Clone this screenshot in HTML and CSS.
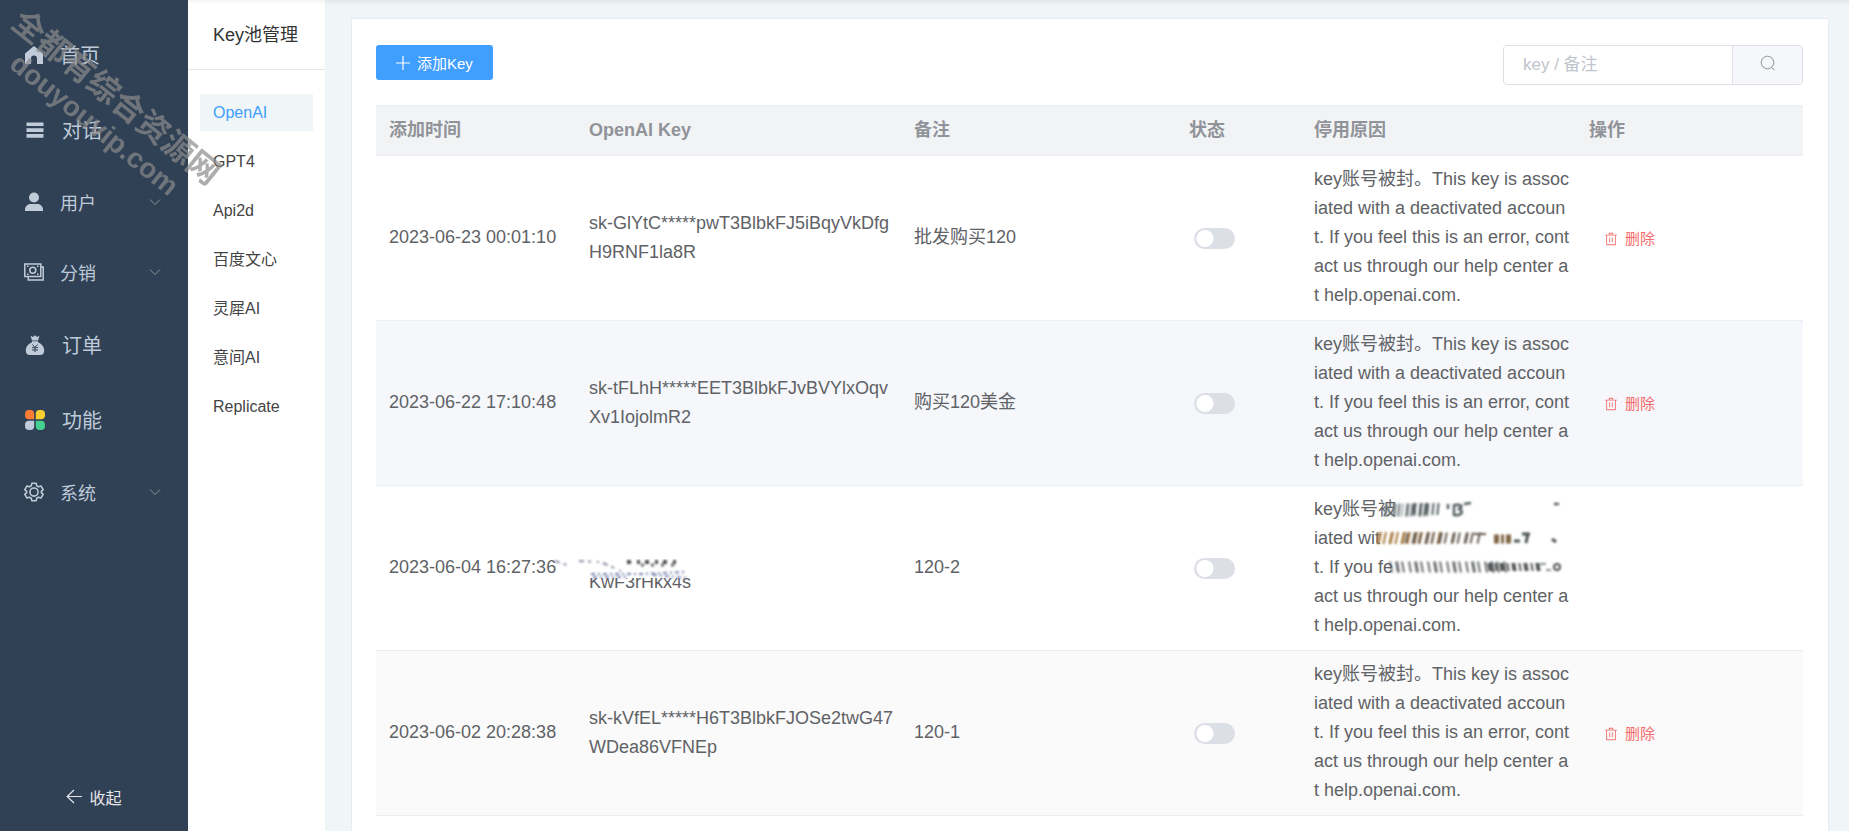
FILE: index.html
```html
<!DOCTYPE html>
<html lang="zh-CN">
<head>
<meta charset="utf-8">
<title>Key池管理</title>
<link rel="stylesheet" href="styles.css">
</head>
<body>
<svg class="defs" aria-hidden="true">
  <symbol id="trash" viewBox="0 0 1024 1024"><path fill="currentColor" d="M160 256H96a32 32 0 0 1 0-64h256V95.900a32 32 0 0 1 32-32h256a32 32 0 0 1 32 32V192h256a32 32 0 1 1 0 64h-64v672a32 32 0 0 1-32 32H192a32 32 0 0 1-32-32V256zm448-64v-64H416v64h192zM224 896h576V256H224v640zm192-128a32 32 0 0 1-32-32V416a32 32 0 0 1 64 0v320a32 32 0 0 1-32 32zm192 0a32 32 0 0 1-32-32V416a32 32 0 0 1 64 0v320a32 32 0 0 1-32 32z"/></symbol>
  <symbol id="chevron" viewBox="0 0 12 12"><path d="M1 3.500 6 8.500 11 3.500" fill="none" stroke="currentColor"/></symbol>
</svg>
<div class="app">
  <nav class="sidebar">
    <ul class="menu">
      <li><a class="item" href="#"><svg class="icon" viewBox="0 0 20 20"><path fill="currentColor" d="M10 1 1 8.500V19h6v-5.500a3 3 0 0 1 6 0V19h6V8.500z"/></svg><span>首页</span></a></li>
      <li><a class="item item-wide" href="#"><svg class="icon" viewBox="0 0 20 20"><path fill="currentColor" d="M1.500 2.500h17v3.600h-17zM1.500 8.300h17v3.600h-17zM1.500 14.100h17v3.600h-17z"/></svg><span>对话</span></a></li>
      <li><a class="item item-group" href="#"><svg class="icon" viewBox="0 0 20 20"><circle cx="10" cy="5.500" r="5" fill="currentColor"/><path fill="currentColor" d="M1 19v-1.500c0-3 2.500-5.500 5.500-5.500h7c3 0 5.500 2.500 5.500 5.500V19z"/></svg><span>用户</span><svg class="chevron"><use href="#chevron"/></svg></a></li>
      <li><a class="item item-group" href="#"><svg class="icon" viewBox="0 0 20 20" fill="none" stroke="currentColor" stroke-width="1.500"><path d="M.8 2h16v12.500h-16zM16.800 5h2.400v13H4.300v-3.500"/><circle cx="8.800" cy="8.200" r="3"/><path d="M3 4.200h1.500M13 4.200h1.500M3 12.300h1.500M13 12.300h1.500"/></svg><span>分销</span><svg class="chevron"><use href="#chevron"/></svg></a></li>
      <li><a class="item item-wide" href="#"><svg class="icon" viewBox="0 0 20 20"><path fill="currentColor" d="M5.500.8 8 2l2-1.800L12 2l2.500-1.200L13 5.500H7zM7 6.300h6v1c4 1.500 6.200 5 6.200 8.200 0 3-1.500 4.500-4.200 4.500H5c-2.700 0-4.200-1.500-4.200-4.500C.8 12.300 3 8.800 7 7.300z"/><path d="m7.500 9.500 2.500 3 2.500-3M10 12.500V17M7 12.700h6M7 15h6" fill="none" stroke="#304156"/></svg><span>订单</span></a></li>
      <li><a class="item item-wide" href="#"><svg class="icon" viewBox="0 0 20 20"><path fill="#ff7d33" d="M4 0h1.500A3.700 3.700 0 0 1 9.200 3.700V9.200H4A4 4 0 0 1 0 5.200V4a4 4 0 0 1 4-4z"/><path fill="#fdcf2f" d="M14.500 0H16a4 4 0 0 1 4 4v1.200a4 4 0 0 1-4 4h-5.200V3.700A3.700 3.700 0 0 1 14.500 0z"/><path fill="#bfcbd9" d="M4 10.800h5.200v5.500A3.700 3.700 0 0 1 5.500 20H4a4 4 0 0 1-4-4v-1.200a4 4 0 0 1 4-4z"/><path fill="#45d18f" d="M10.800 10.800H16a4 4 0 0 1 4 4V16a4 4 0 0 1-4 4h-1.500a3.700 3.700 0 0 1-3.700-3.700z"/></svg><span>功能</span></a></li>
      <li><a class="item item-group" href="#"><svg class="icon" viewBox="0 0 24 24" fill="none" stroke="currentColor" stroke-width="1.900"><circle cx="12" cy="12" r="4.900"/><path d="M9.500 1.500h5l.8 3 2.200 1.300 3-.9 2.500 4.300-2.200 2.100v1.400l2.200 2.100-2.500 4.300-3-.9-2.200 1.300-.8 3h-5l-.8-3-2.200-1.300-3 .9L1 14.800l2.200-2.100v-1.400L1 9.200l2.500-4.300 3 .9 2.200-1.300z" stroke-linejoin="round"/></svg><span>系统</span><svg class="chevron"><use href="#chevron"/></svg></a></li>
    </ul>
    <button class="collapse" type="button"><svg viewBox="0 0 16 16" fill="none" stroke="currentColor" stroke-width="1.200"><path d="M16 7.500H1M8 1 1.200 7.500 8 14"/></svg>收起</button>
  </nav>
  <aside class="subnav">
    <h1 class="subnav-title">Key池管理</h1>
    <ul class="tabs">
      <li><a class="tab tab-active" href="#">OpenAI</a></li>
      <li><a class="tab" href="#">GPT4</a></li>
      <li><a class="tab" href="#">Api2d</a></li>
      <li><a class="tab" href="#">百度文心</a></li>
      <li><a class="tab" href="#">灵犀AI</a></li>
      <li><a class="tab" href="#">意间AI</a></li>
      <li><a class="tab" href="#">Replicate</a></li>
    </ul>
  </aside>
  <main class="main">
    <section class="card">
      <div class="toolbar">
        <button class="add" type="button"><svg viewBox="0 0 14 14"><path d="M7 0v14M0 7h14" stroke="currentColor" stroke-width="1.200"/></svg>添加Key</button>
        <form class="search">
          <input type="text" placeholder="key / 备注" aria-label="key / 备注">
          <button type="button" aria-label="搜索"><svg viewBox="0 0 16 16" fill="none" stroke="currentColor"><circle cx="7.500" cy="7.500" r="6.300"/><path d="m11.500 12.500 3 2.500"/></svg></button>
        </form>
      </div>
      <table class="table">
        <colgroup><col class="c-time"><col class="c-key"><col class="c-note"><col class="c-state"><col class="c-reason"><col></colgroup>
        <thead><tr><th>添加时间</th><th>OpenAI Key</th><th>备注</th><th>状态</th><th>停用原因</th><th>操作</th></tr></thead>
        <tbody>
          <tr>
            <td>2023-06-23 00:01:10</td><td>sk-GlYtC*****pwT3BlbkFJ5iBqyVkDfg<br>H9RNF1la8R</td><td>批发购买120</td>
            <td><input class="switch" type="checkbox" role="switch" aria-label="状态"></td>
            <td>key账号被封。This key is assoc<br>iated with a deactivated accoun<br>t. If you feel this is an error, cont<br>act us through our help center a<br>t help.openai.com.</td>
            <td><button class="delete" type="button"><svg><use href="#trash"/></svg>删除</button></td>
          </tr>
          <tr class="hovered">
            <td>2023-06-22 17:10:48</td><td>sk-tFLhH*****EET3BlbkFJvBVYlxOqv<br>Xv1IojolmR2</td><td>购买120美金</td>
            <td><input class="switch" type="checkbox" role="switch" aria-label="状态"></td>
            <td>key账号被封。This key is assoc<br>iated with a deactivated accoun<br>t. If you feel this is an error, cont<br>act us through our help center a<br>t help.openai.com.</td>
            <td><button class="delete" type="button"><svg><use href="#trash"/></svg>删除</button></td>
          </tr>
          <tr>
            <td>2023-06-04 16:27:36</td>
            <td><div class="smudged"><br>KwF3rHkx4s
              <svg class="smudge smudge-key" viewBox="0 0 140 32" aria-hidden="true"><path fill="#fff" d="M35 0h105v19H35z"/><g class="blur" fill="none" transform="translate(0 -3)"><path stroke="#8a8da0" stroke-width="2" stroke-dasharray="5 4 3 6" d="M2 5l12 4M26 5l20 1M50 7l18 8"/><path stroke="#4d4a50" stroke-width="4" stroke-dasharray="4 6 3 5" d="M74 6h52"/><path stroke="#6b6668" stroke-width="3" stroke-dasharray="3 7" d="M88 9h38"/><path stroke="#7b82b0" stroke-width="2" stroke-dasharray="4 3 2 3" d="M38 18h50l45-2M40 21h36M100 19l35 3"/></g></svg>
            </div></td>
            <td>120-2</td>
            <td><input class="switch" type="checkbox" role="switch" aria-label="状态"></td>
            <td><div class="smudged">key账号被<br>iated wit<br>t. If you fe<br>act us through our help center a<br>t help.openai.com.
              <svg class="smudge smudge-reason" viewBox="0 0 190 80" aria-hidden="true"><g class="blur" fill="none"><g transform="translate(2 0) skewX(-6)"><path stroke="#6c7778" stroke-width="13" stroke-dasharray="2 2 1 3 3 2" d="M8 11h46"/><path stroke="#555f60" stroke-width="12" stroke-dasharray="3 4 2 3" d="M36 10h26"/></g><path stroke="#555f60" stroke-width="2.500" d="M72 5v5M78 5v12M79 6c8-1 8 3 3 4 6 1 5 7-4 6M88 5l7-1M178 5h5"/><g transform="translate(8 0) skewX(-12)"><path stroke="#a8773c" stroke-width="12" stroke-dasharray="3 3 2 4" d="M2 39h66"/><path stroke="#655a50" stroke-width="11" stroke-dasharray="2 5 3 3" d="M30 39h74"/></g><path stroke="#806545" stroke-width="9" stroke-dasharray="5 2 3 2" d="M118 40h18"/><path stroke="#655a50" stroke-width="2" d="M98 35h12"/><path stroke="#4d5552" stroke-width="3" d="M138 42h6M152 34l-2 10M176 40l4 3M146 35h8"/><g transform="translate(-12 0) skewX(10)"><path stroke="#686b6d" stroke-width="11" stroke-dasharray="2 4 3 3 2 5" d="M14 68h116"/><path stroke="#505354" stroke-width="8" stroke-dasharray="4 3 2 3" d="M112 68h54"/></g><path stroke="#8a8f90" stroke-width="2" d="M164 65h6M170 71h5"/><circle cx="181" cy="68" r="3" stroke="#505354" stroke-width="2"/></g></svg>
            </div></td>
            <td></td>
          </tr>
          <tr class="striped">
            <td>2023-06-02 20:28:38</td><td>sk-kVfEL*****H6T3BlbkFJOSe2twG47<br>WDea86VFNEp</td><td>120-1</td>
            <td><input class="switch" type="checkbox" role="switch" aria-label="状态"></td>
            <td>key账号被封。This key is assoc<br>iated with a deactivated accoun<br>t. If you feel this is an error, cont<br>act us through our help center a<br>t help.openai.com.</td>
            <td><button class="delete" type="button"><svg><use href="#trash"/></svg>删除</button></td>
          </tr>
        </tbody>
      </table>
    </section>
  </main>
</div>
<div class="watermark"><span>全都有综合资源网</span><span class="watermark-url">douyouvip.com</span></div>
</body>
</html>
```
FILE: styles.css
```css
* { box-sizing: border-box; }
body {
  margin: 0;
  overflow: hidden;
  color: #606266;
  background: #f0f5f8;
  font-family: "Liberation Sans", "Noto Sans CJK SC", sans-serif;
  font-size: 18px;
}
ul { margin: 0; padding: 0; list-style: none; }
a { color: inherit; text-decoration: none; }
button { padding: 0; border: 0; background: none; font: inherit; cursor: pointer; }
.defs { position: absolute; width: 0; height: 0; }
.app { display: flex; height: 100vh; }

.sidebar {
  display: flex;
  flex: 0 0 188px;
  flex-direction: column;
  justify-content: space-between;
  padding: 17px 0 18px;
  background: #304156;
  color: #bfcbd9;
}
.item {
  display: flex;
  align-items: center;
  gap: 16px;
  height: 75px;
  padding: 0 27px 0 24px;
  font-size: 20px;
}
.item-wide { gap: 17px; padding-left: 25px; }
.item-group { height: 70px; font-size: 18px; }
.icon { width: 20px; height: 20px; }
.chevron { width: 12px; height: 12px; margin-left: auto; color: #909399; }
.collapse {
  display: flex;
  align-items: center;
  align-self: center;
  gap: 7px;
  height: 32px;
  color: #e6e6e6;
  font-size: 16px;
}
.collapse svg { width: 16px; height: 16px; }

.subnav { flex: 0 0 137px; background: #fff; box-shadow: inset 0 4px 4px -3px #0001; }
.subnav-title {
  height: 70px;
  margin: 0;
  padding-left: 25px;
  border-bottom: 1px solid #e6e6e6;
  color: #333;
  font-size: 18px;
  font-weight: 400;
  line-height: 71px;
}
.tabs { display: grid; gap: 12px; padding: 24px 12px; }
.tab {
  display: block;
  height: 37px;
  padding-left: 13px;
  color: #444;
  font-size: 16px;
  line-height: 37px;
}
.tab-active { background: #f0f5f8; color: #409eff; }

.main { flex: 1; min-width: 0; padding: 18px 20px 0 26px; box-shadow: inset 0 5px 5px -3px #0001; }
.card {
  height: 100%;
  padding: 26px 25px 0 24px;
  border: 1px solid #e8ebf0;
  border-bottom: 0;
  background: #fff;
}
.toolbar { display: flex; align-items: flex-start; justify-content: space-between; margin-bottom: 20px; }
.add {
  display: flex;
  align-items: center;
  gap: 7px;
  height: 35px;
  padding: 0 20px;
  border-radius: 3px;
  background: #409eff;
  color: #fff;
  font-size: 15px;
}
.add svg { width: 14px; height: 14px; }
.search { display: flex; width: 300px; height: 40px; border: 1px solid #dcdfe6; border-radius: 4px; }
.search input {
  flex: 1;
  min-width: 0;
  padding: 0 19px;
  border: 0;
  border-right: 1px solid #dcdfe6;
  border-radius: 4px 0 0 4px;
  outline: 0;
  font: inherit;
  font-size: 17px;
}
.search input::placeholder { color: #c0c4cc; }
.search button { width: 69px; border-radius: 0 4px 4px 0; background: #f5f7fa; color: #909399; }
.search svg { width: 16px; height: 16px; }

.table { width: 100%; border-collapse: collapse; table-layout: fixed; line-height: 29px; }
.c-time { width: 200px; }
.c-key { width: 325px; }
.c-note { width: 275px; }
.c-state { width: 125px; }
.c-reason { width: 275px; }
th {
  padding: 10px 0 10px 13px;
  border: solid #ebeef5;
  border-width: 1px 0;
  background: #f2f3f5;
  color: #909399;
  text-align: left;
}
td { padding: 9px 0 10px 13px; border-bottom: 1px solid #ebeef5; white-space: nowrap; }
.hovered { background: #f5f7fb; }
.striped { background: #fafafa; }
.switch {
  display: block;
  width: 41px;
  height: 21px;
  margin: 2px 0 0 5px;
  border-radius: 11px;
  background: radial-gradient(circle at 11px 50%, #fff 8px, #dcdfe6 9px);
  appearance: none;
}
.delete {
  display: flex;
  align-items: center;
  gap: 7px;
  margin: 2px 0 0 15px;
  color: #f56c6c;
  font-size: 15px;
}
.delete svg { width: 14px; height: 14px; }
.smudged { position: relative; }
.smudge { position: absolute; }
.smudge-key { top: 20px; left: -36px; width: 140px; height: 32px; }
.smudge-reason { top: 4px; left: 62px; width: 190px; height: 80px; }
.blur { filter: blur(1px); }

.watermark {
  position: absolute;
  top: 75px;
  left: -22px;
  display: grid;
  justify-items: center;
  width: 256px;
  color: #8b8b8b;
  font-size: 32px;
  font-weight: 700;
  line-height: 38px;
  opacity: .7;
  pointer-events: none;
  transform: rotate(39deg);
}
.watermark-url { font-size: 28px; line-height: 32px; }
```
